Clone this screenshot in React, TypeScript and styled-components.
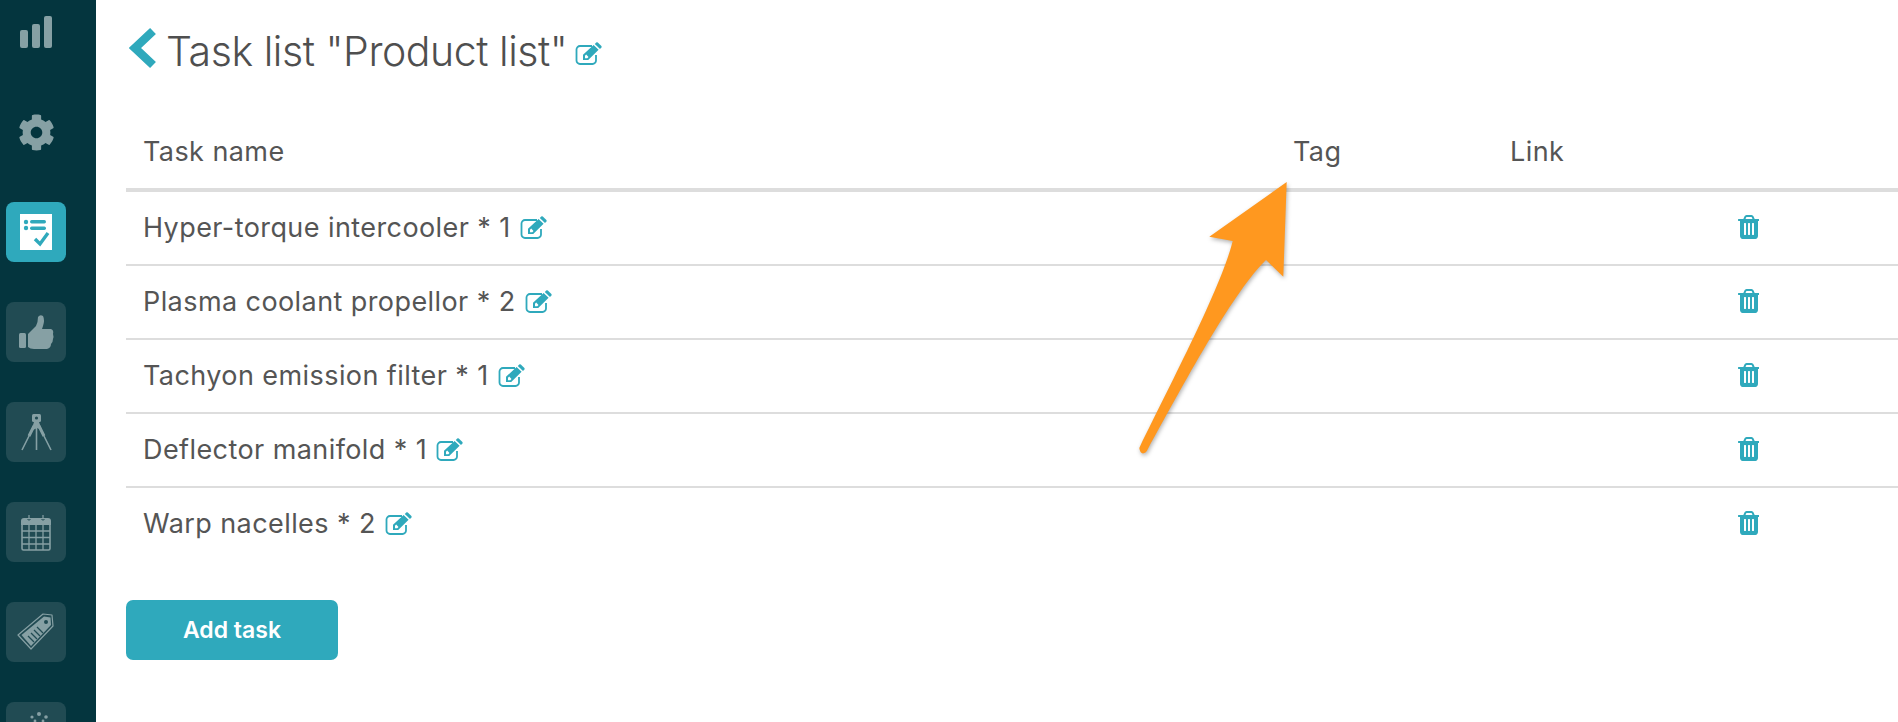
import React from "react";
import styled, { createGlobalStyle } from "styled-components";
import { FaCog } from "react-icons/fa";

const GlobalStyle = createGlobalStyle`
  html, body {
    margin: 0;
    height: 100%;
    overflow: hidden;
    background: #fff;
    font-family: Inter, "Open Sans", sans-serif;
    color: #555;
  }
`;

const Page = styled.div`
  position: relative;
  display: flex;
  width: 1898px;
  height: 722px;
  overflow: hidden;
`;

const Sidebar = styled.nav`
  display: flex;
  flex-direction: column;
  align-items: flex-start;
  gap: 40px;
  flex: none;
  width: 96px;
  height: 722px;
  padding: 2px 0 0 6px;
  box-sizing: border-box;
  background: #04353e;
  overflow: hidden;
`;

const NavItem = styled.div<{ $state?: "plain" | "boxed" | "active" }>`
  display: flex;
  align-items: center;
  justify-content: center;
  flex: none;
  width: 60px;
  height: 60px;
  border-radius: 8px;
  color: #86a0a4;
  background: ${(p) =>
    p.$state === "active" ? "#2fa9bc" : p.$state === "boxed" ? "#214b53" : "transparent"};
`;

const Main = styled.main`
  flex: 1;
  padding-left: 30px;
`;

const Heading = styled.header`
  display: flex;
  align-items: center;
  height: 96px;
`;

const BackIcon = styled.svg`
  flex: none;
  width: 28px;
  height: 42px;
  margin: 0 9px 0 3px;
  color: #2fa9bc;
`;

const Title = styled.h1`
  margin: 6px 0 0;
  font-size: 41px;
  font-weight: 300;
  letter-spacing: -0.45px;
  color: #4f4f4f;
`;

const EditIcon = styled.svg<{ $gap: number; $drop: number }>`
  flex: none;
  width: 28px;
  height: 23px;
  margin: ${(p) => p.$drop}px 0 0 ${(p) => p.$gap}px;
  color: #2fa9bc;
`;

const Row = styled.div<{ $head?: boolean; $last?: boolean }>`
  display: grid;
  grid-template-columns: 1150px 217px 227px 1fr;
  align-items: center;
  box-sizing: border-box;
  height: ${(p) => (p.$head ? 96 : p.$last ? 72 : 74)}px;
  padding: ${(p) => (p.$head ? "18px 0 0 17px" : "0 0 2px 17px")};
  border-bottom: ${(p) => (p.$head ? "4px solid #ddd" : p.$last ? "none" : "2px solid #ddd")};
  font-size: 27px;
  letter-spacing: 0.42px;
`;

const NameCell = styled.div`
  display: flex;
  align-items: center;
`;

const TrashIcon = styled.svg`
  display: block;
  width: 22px;
  height: 24px;
  color: #2fa9bc;
`;

const AddButton = styled.button`
  display: block;
  width: 212px;
  height: 60px;
  margin-top: 40px;
  border: none;
  border-radius: 7px;
  background: #2fa9bc;
  color: #fff;
  font: 600 23px Inter, sans-serif;
`;

const Arrow = styled.svg`
  position: absolute;
  left: 1130px;
  top: 175px;
  width: 165px;
  height: 285px;
  filter: drop-shadow(1px 2px 2px rgba(0, 0, 0, 0.3));
`;

const tasks = [
  "Hyper-torque intercooler * 1",
  "Plasma coolant propellor * 2",
  "Tachyon emission filter * 1",
  "Deflector manifold * 1",
  "Warp nacelles * 2",
];

const Edit = ({ gap, drop = 0 }: { gap: number; drop?: number }) => (
  <EditIcon $gap={gap} $drop={drop} viewBox="0 0 28 23">
    <path
      d="M17 4H5a3.5 3.5 0 0 0-3.5 3.5v11A3.5 3.5 0 0 0 5 22h12.5a3.5 3.5 0 0 0 3.5-3.5V13"
      fill="none"
      stroke="currentColor"
      strokeWidth="1.8"
    />
    <path fill="currentColor" d="M8 18v-5.2L18.6 3l5 4.8L13.2 18zM10 13.8v2.4h2.3l1.2-1.2-2.3-2.4z" fillRule="evenodd" />
    <path fill="currentColor" d="M19.8 1.9l1.4-1.3q0.8-0.6 1.6 0l3.6 3.4q0.6 0.8 0 1.6l-1.4 1.4z" />
  </EditIcon>
);

const Trash = () => (
  <TrashIcon viewBox="128 128 1408 1536" preserveAspectRatio="none">
    <path
      fill="currentColor"
      d="M704 1376v-704q0-14-9-23t-23-9h-64q-14 0-23 9t-9 23v704q0 14 9 23t23 9h64q14 0 23-9t9-23zm256 0v-704q0-14-9-23t-23-9h-64q-14 0-23 9t-9 23v704q0 14 9 23t23 9h64q14 0 23-9t9-23zm256 0v-704q0-14-9-23t-23-9h-64q-14 0-23 9t-9 23v704q0 14 9 23t23 9h64q14 0 23-9t9-23zm-544-992h448l-48-117q-7-9-17-11h-317q-10 2-17 11zm928 32v64q0 14-9 23t-23 9h-96v948q0 83-47 143.5t-113 60.5h-832q-66 0-113-63t-47-146v-943h-96q-14 0-23-9t-9-23v-64q0-14 9-23t23-9h309l70-167q15-37 54-63t79-26h320q40 0 79 26t54 63l70 167h309q14 0 23 9t9 23z"
    />
  </TrashIcon>
);

const BarsGlyph = () => (
  <svg width="60" height="60" viewBox="0 0 60 60" fill="currentColor">
    <rect x="14" y="28" width="8" height="18" rx="2" />
    <rect x="26" y="22" width="8" height="24" rx="2" />
    <rect x="38" y="14" width="8" height="32" rx="2" />
  </svg>
);

const ChecklistGlyph = () => (
  <svg width="60" height="60" viewBox="0 0 60 60">
    <rect x="14" y="12" width="32" height="36" fill="#fff" />
    <g fill="#2fa9bc">
      <circle cx="20" cy="20" r="2.2" />
      <circle cx="20" cy="26" r="2.2" />
      <rect x="24" y="18" width="16" height="3.4" rx="1.7" />
      <rect x="24" y="24.6" width="16" height="3.4" rx="1.7" />
    </g>
    <path d="M29 37l5 5 8-11" fill="none" stroke="#2fa9bc" strokeWidth="3.4" />
  </svg>
);

const ThumbGlyph = () => (
  <svg width="60" height="60" viewBox="0 0 60 60" fill="currentColor">
    <rect x="13" y="31" width="7" height="15" rx="1.5" />
    <path d="M22 32L30 24Q32 20 32 15Q34 12 37 14Q39 18 37 24L36 27H45Q48 28 47 32Q48 35 47 37Q47 40 45 42Q45 46 41 47H28Q24 47 22 45Z" />
  </svg>
);

const TripodGlyph = () => (
  <svg width="60" height="60" viewBox="0 0 60 60">
    <rect x="26" y="12" width="9" height="8" rx="1.5" fill="currentColor" />
    <circle cx="30.5" cy="16" r="1.6" fill="#214b53" />
    <path d="M28 20h5l3 8-5-2-6 3z" fill="currentColor" />
    <path d="M28 24L16 48M33 24l12 24M30.5 24v24" fill="none" stroke="currentColor" strokeWidth="1.6" />
    <path d="M28 24l-5 10M33 24l5 10" fill="none" stroke="currentColor" strokeWidth="3" />
  </svg>
);

const CalendarGlyph = () => (
  <svg width="60" height="60" viewBox="0 0 60 60">
    <path d="M15 19q0-3 3-3h24q3 0 3 3v4H15z" fill="currentColor" />
    <rect x="16" y="22" width="28" height="26" rx="1.5" fill="none" stroke="currentColor" strokeWidth="1.6" />
    <path d="M16 29h28M16 35.5h28M16 42h28M23 22v26M30 22v26M37 22v26" stroke="currentColor" strokeWidth="1.3" />
    <path d="M23 13v6M37 13v6" stroke="#86a0a4" strokeWidth="1.2" />
    <path d="M21.5 17a1.6 1.6 0 0 0 3 0M35.5 17a1.6 1.6 0 0 0 3 0" fill="none" stroke="#214b53" strokeWidth="1" />
  </svg>
);

const TagGlyph = () => (
  <svg width="60" height="60" viewBox="0 0 60 60">
    <path d="M12 33L37 12L46 13L47 24L25 47Z" fill="none" stroke="currentColor" strokeWidth="1.2" strokeLinejoin="round" />
    <path d="M15.5 33L38 14.5L44.5 15.5L45 23L25 44Z" fill="currentColor" />
    <circle cx="40" cy="20" r="2" fill="#214b53" />
    <path d="M22 34l6 6M25 31l6 6M28 28l6 6M31 25l6 6" stroke="#214b53" strokeWidth="1.3" />
  </svg>
);

const SpinnerGlyph = () => (
  <svg width="60" height="60" viewBox="0 0 60 60" fill="currentColor">
    <circle cx="33" cy="12" r="2" />
    <circle cx="26" cy="15" r="1.6" />
    <circle cx="40" cy="15" r="1.8" />
    <circle cx="29" cy="19" r="1.4" />
    <circle cx="37" cy="19" r="1.4" />
  </svg>
);

export default function App() {
  return (
    <Page>
      <GlobalStyle />
      <Sidebar>
        <NavItem>
          <BarsGlyph />
        </NavItem>
        <NavItem>
          <FaCog size={37} />
        </NavItem>
        <NavItem $state="active">
          <ChecklistGlyph />
        </NavItem>
        <NavItem $state="boxed">
          <ThumbGlyph />
        </NavItem>
        <NavItem $state="boxed">
          <TripodGlyph />
        </NavItem>
        <NavItem $state="boxed">
          <CalendarGlyph />
        </NavItem>
        <NavItem $state="boxed">
          <TagGlyph />
        </NavItem>
        <NavItem $state="boxed">
          <SpinnerGlyph />
        </NavItem>
      </Sidebar>
      <Main>
        <Heading>
          <BackIcon viewBox="0 0 28 42">
            <path d="M24 4L6 21l18 17" fill="none" stroke="currentColor" strokeWidth="8.5" strokeLinejoin="miter" />
          </BackIcon>
          <Title>Task list "Product list"</Title>
          <Edit gap={8} drop={10} />
        </Heading>
        <Row $head>
          <div>Task name</div>
          <div>Tag</div>
          <div>Link</div>
        </Row>
        {tasks.map((task, i) => (
          <Row key={task} $last={i === tasks.length - 1}>
            <NameCell>
              {task}
              <Edit gap={9} />
            </NameCell>
            <div />
            <div />
            <Trash />
          </Row>
        ))}
        <AddButton>Add task</AddButton>
      </Main>
      <Arrow viewBox="1130 175 165 285">
        <path
          fill="#ff981f"
          d="M1286.7 182L1209.3 236.7L1232.7 241C1222 285 1175 375 1139.3 448Q1140 453 1143 453.5Q1146 453 1147 450.7C1190 372 1235 290 1266 260L1283.3 276.7Z"
        />
      </Arrow>
    </Page>
  );
}
